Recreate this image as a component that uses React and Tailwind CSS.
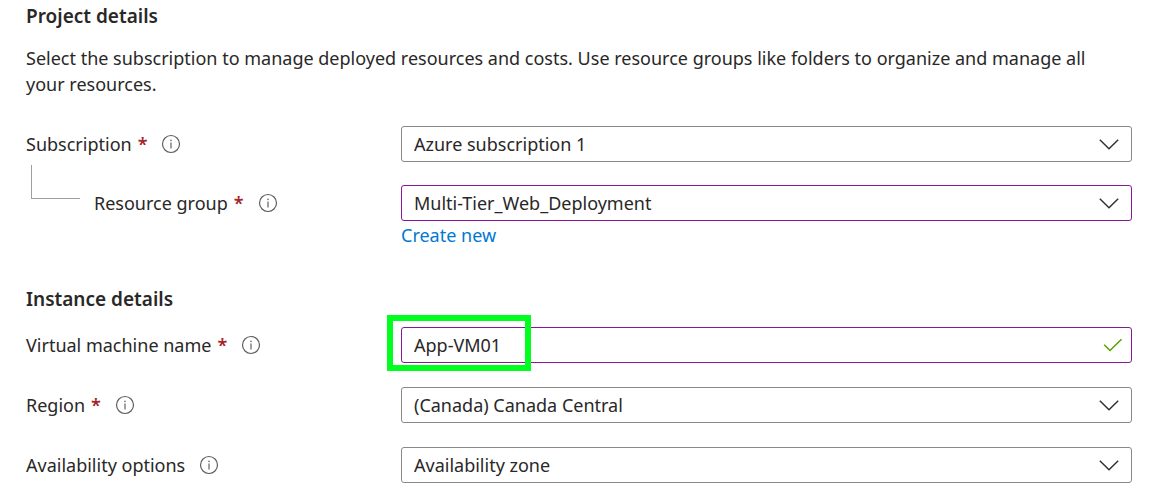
import { useState } from "react";

function InfoIcon() {
  return (
    <svg className="size-5 shrink-0" viewBox="0 0 20 20" fill="none" aria-hidden="true">
      <circle cx="10" cy="10" r="8.5" stroke="#605e5c" strokeWidth="1.2" />
      <path d="M10 8.5v6" stroke="#7a7876" strokeWidth="1.4" />
      <circle cx="10" cy="6.3" r="0.9" fill="#7a7876" />
    </svg>
  );
}

function Chevron() {
  return (
    <svg
      className="pointer-events-none absolute top-3 right-[13px] h-3 w-5"
      viewBox="0 0 20 12"
      fill="none"
      stroke="#323130"
      strokeWidth="1.5"
      aria-hidden="true"
    >
      <path d="M0.8 1.8L10 10.7L19.2 1.8" />
    </svg>
  );
}

function FieldRow({ id, label, required, nested, children }) {
  return (
    <div className="flex items-start">
      <div className="flex h-9 w-[375px] shrink-0 items-center">
        {nested && (
          <span className="mr-[14px] ml-[5px] -mt-[42px] h-[34px] w-[49px] border-b border-l border-[#a19f9d]" />
        )}
        <label htmlFor={id} className="flex items-center whitespace-nowrap">
          {label}
          {required && <span className="ml-[6px] font-semibold text-[#a4262c]">*</span>}
        </label>
        <button type="button" aria-label={"About " + label} className="ml-[14px]">
          <InfoIcon />
        </button>
      </div>
      <div className="min-w-0 flex-1">{children}</div>
    </div>
  );
}

function SelectBox({ id, value, edited }) {
  return (
    <div className="relative">
      <select
        id={id}
        defaultValue={value}
        className={
          "block h-9 w-full appearance-none rounded-[3px] border bg-white pr-10 pl-3 " +
          (edited ? "border-[#881798]" : "border-[#8a8886]")
        }
      >
        <option>{value}</option>
      </select>
      <Chevron />
    </div>
  );
}

export default function App() {
  const [name, setName] = useState("App-VM01");

  return (
    <main className="bg-white pt-[3px] pr-[30px] pb-2 pl-[26px] font-['Noto_Sans','Open_Sans',sans-serif] text-[18px] leading-[26px] text-[#292827]">
      <section>
        <h2 className="text-[19px] font-semibold">Project details</h2>
        <p className="mt-4 pr-5">
          Select the subscription to manage deployed resources and costs. Use resource groups like
          folders to organize and manage all your resources.
        </p>
        <div className="mt-[29px] flex flex-col gap-[23px]">
          <FieldRow id="subscription" label="Subscription" required>
            <SelectBox id="subscription" value="Azure subscription 1" />
          </FieldRow>
          <FieldRow id="resource-group" label="Resource group" required nested>
            <SelectBox id="resource-group" value="Multi-Tier_Web_Deployment" edited />
            <a href="#create" className="mt-px block w-fit text-[#0078d4]">
              Create new
            </a>
          </FieldRow>
        </div>
      </section>

      <section className="mt-[38px]">
        <h2 className="text-[19px] font-semibold">Instance details</h2>
        <div className="mt-[15px] flex flex-col gap-6">
          <FieldRow id="vm-name" label="Virtual machine name" required>
            <div className="relative">
              <input
                id="vm-name"
                type="text"
                value={name}
                onChange={(e) => setName(e.target.value)}
                className="block h-9 w-full rounded-[3px] border border-[#881798] bg-white pr-10 pl-3"
              />
              <svg
                className="pointer-events-none absolute top-[11px] right-[9px] h-[14px] w-5"
                viewBox="0 0 20 14"
                fill="none"
                stroke="#57a300"
                strokeWidth="1.6"
                aria-hidden="true"
              >
                <path d="M1.2 6.8L7 12.5L18.5 1.2" />
              </svg>
              <span className="pointer-events-none absolute -top-3 -left-[14px] h-14 w-36 border-6 border-[#00ff1e]" />
            </div>
          </FieldRow>
          <FieldRow id="region" label="Region" required>
            <SelectBox id="region" value="(Canada) Canada Central" />
          </FieldRow>
          <FieldRow id="availability" label="Availability options">
            <SelectBox id="availability" value="Availability zone" />
          </FieldRow>
        </div>
      </section>
    </main>
  );
}
